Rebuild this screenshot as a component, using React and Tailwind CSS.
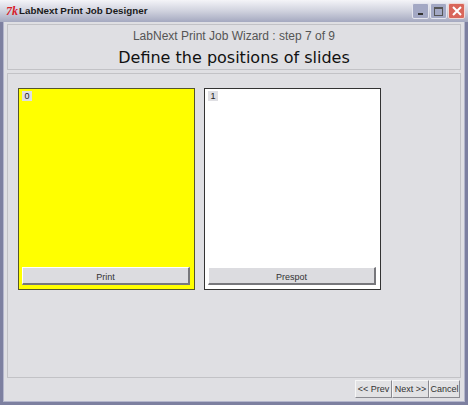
import React from 'react';

const Slide = ({ index, label, color, border }) => (
  <div className={`w-[177px] h-[202px] border ${border} flex flex-col justify-between pt-[2px] pl-[3px] pr-[4px] pb-[3px] ${color}`}>
    <span className="self-start w-[10px] h-[10px] bg-[#dfdfe3] text-[9px] leading-[10px] text-center text-[#222]">{index}</span>
    <button className="mb-[1px] h-[18px] bg-[#dcdce0] border-t border-l border-white border-r-2 border-b-2 border-r-[#77777c] border-b-[#77777c] text-[9px] leading-none text-[#333] pt-[3px]">{label}</button>
  </div>
);

const NavButton = ({ children, className }) => (
  <button className={`h-[18px] bg-[#e2e2e4] border border-[#f6f6f6] border-r-[#8a8a90] border-b-[#8a8a90] text-[9px] leading-none text-[#333] pt-[1px] ${className}`}>{children}</button>
);

const App = () => {
  return (
    <div className="w-[468px] h-[405px] flex flex-col bg-[#7d80a0] overflow-hidden" style={{ fontFamily: '"Liberation Sans", Arial, sans-serif' }}>
      {/* title bar */}
      <div className="h-[22px] shrink-0 flex items-center pl-[6px] pr-[3px] bg-gradient-to-b from-[#f4f4f8] via-[#d0d2de] to-[#a5a9c0]">
        <span className="w-[13px] text-[12px] font-bold italic leading-none text-[#d8202a]" style={{ fontFamily: '"Liberation Serif", serif' }}>7k</span>
        <span className="text-[9.8px] font-bold text-[#1a1a1a]">LabNext Print Job Designer</span>
        <div className="ml-auto flex gap-[1px]">
          <div className="w-[17px] h-[16px] rounded-[2px] bg-[#a3a8c4] border border-[#e4e5ee] flex items-end justify-center pb-[3px]">
            <div className="w-[5px] h-[2px] bg-[#333]" />
          </div>
          <div className="w-[17px] h-[16px] rounded-[2px] bg-[#a3a8c4] border border-[#e4e5ee] flex items-center justify-center">
            <div className="w-[9px] h-[9px] border border-[#555] border-t-2" />
          </div>
          <div className="w-[17px] h-[16px] rounded-[2px] bg-[#d9665a] border border-[#f0d8d4] flex items-center justify-center">
            <svg width="12" height="12" viewBox="0 0 12 12"><path d="M2 2l8 8M10 2l-8 8" stroke="#fff" strokeWidth="2" /></svg>
          </div>
        </div>
      </div>

      {/* body */}
      <div className="flex-1 mx-[3px] mb-[3px] bg-[#dfdfe3] border-l border-r border-b border-[#b4b6cc] flex flex-col px-[3px] pt-[2px] pb-[3px] min-h-0">
        <div className="h-[46px] shrink-0 border border-[#c2c2c6] flex flex-col items-center pt-[4px]">
          <div className="text-[12px] leading-[14px] text-[#555]">LabNext Print Job Wizard : step 7 of 9</div>
          <div className="mt-[5px] text-[16px] leading-[20px] text-[#111]" style={{ fontFamily: '"DejaVu Sans", sans-serif' }}>Define the positions of slides</div>
        </div>
        <div className="h-[305px] shrink-0 mt-[3px] border border-[#c2c2c6] flex items-start gap-[9px] pl-[10px] pt-[14px]">
          <Slide index="0" label="Print" color="bg-[#ffff00]" border="border-[#55552a]" />
          <Slide index="1" label="Prespot" color="bg-white" border="border-[#333]" />
        </div>
        <div className="flex-1 flex items-start justify-end pt-[2px] pr-[1px]">
          <NavButton className="w-[37px]">&lt;&lt; Prev</NavButton>
          <NavButton className="w-[37px]">Next &gt;&gt;</NavButton>
          <NavButton className="w-[31px]">Cancel</NavButton>
        </div>
      </div>
    </div>
  );
};

export default App;
